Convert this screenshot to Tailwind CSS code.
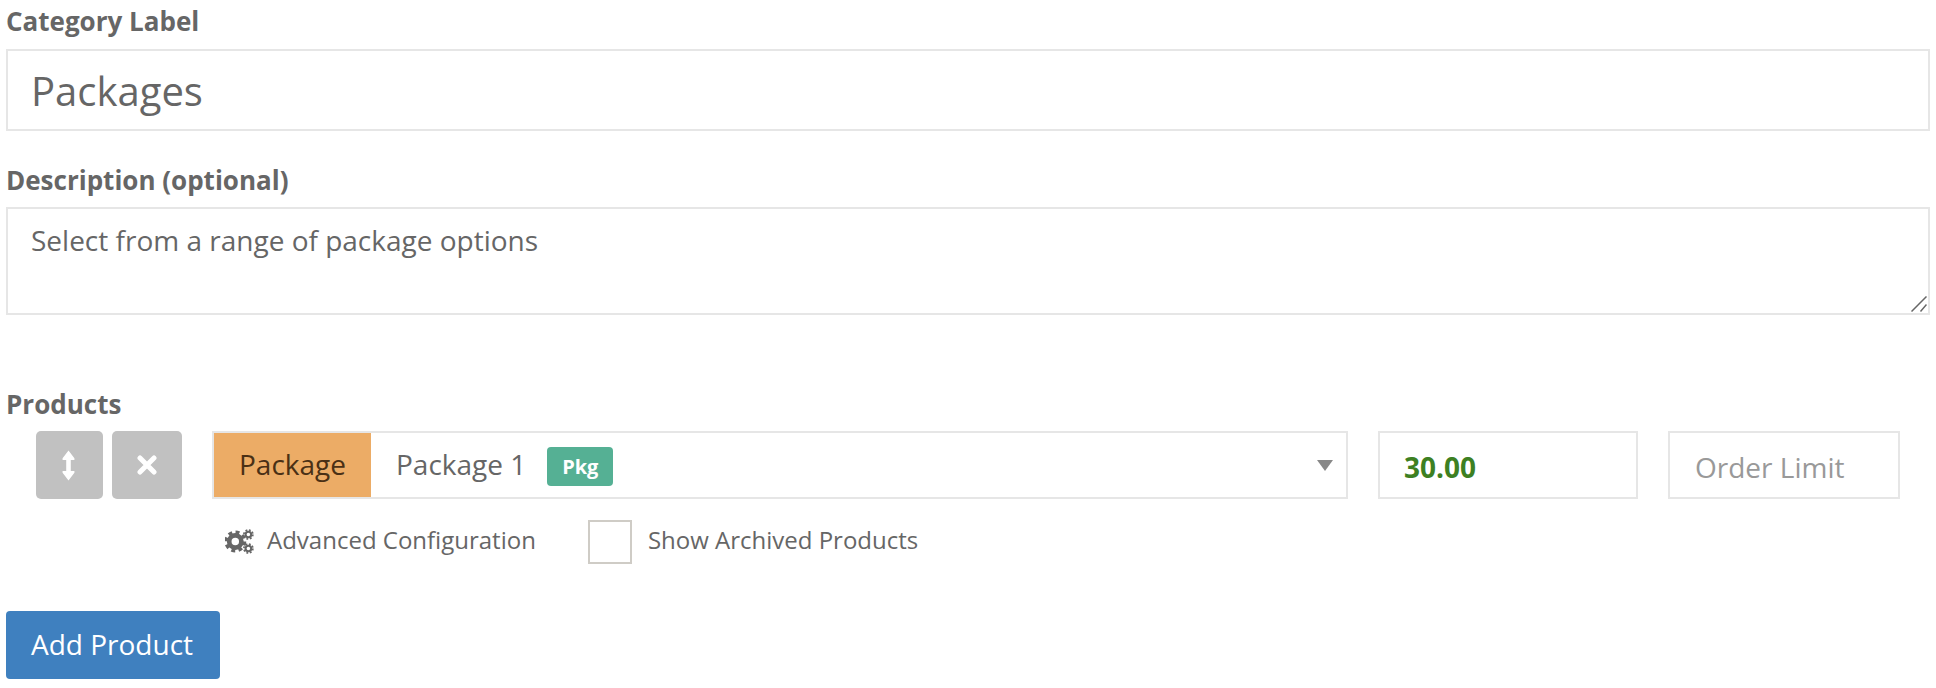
<!DOCTYPE html>
<html lang="en">
<head>
  <meta charset="UTF-8" />
  <title>Category</title>
  <script src="https://cdn.jsdelivr.net/npm/@tailwindcss/browser@4"></script>
</head>
<body class="bg-white text-[#666] font-['Open_Sans',sans-serif] overflow-hidden">
  <div class="px-[6px]">
    <!-- category label -->
    <label class="block h-[49px] pt-[6px] text-[26px] leading-[30px] font-bold">Category Label</label>
    <input type="text" value="Packages" class="block w-full h-[82px] border-2 border-[#e6e6e6] px-[23px] text-[40px] text-[#666] outline-none" />

    <!-- description -->
    <label class="block h-[42px] mt-[34px] text-[26px] leading-[30px] font-bold">Description (optional)</label>
    <div class="relative">
      <textarea class="block w-full h-[108px] border-2 border-[#e6e6e6] px-[23px] py-[12px] text-[28px] leading-[38px] text-[#666] outline-none resize-none">Select from a range of package options</textarea>
      <svg class="absolute right-[3px] bottom-[3px] w-[16px] h-[16px]" viewBox="0 0 16 16" fill="none" stroke="#666" stroke-width="1.5"><path d="M0.5 15.5 15.5 0.5M9.5 15.5 15.5 8.5"/></svg>
    </div>

    <!-- products -->
    <label class="block h-[42px] mt-[74px] text-[26px] leading-[30px] font-bold">Products</label>
    <div class="flex pl-[30px] pr-[30px]">
      <button class="w-[67px] h-[68px] mr-[9px] flex items-center justify-center rounded-[5px] bg-[#c1c1c1] text-white">
        <svg class="w-[13px] h-[31px] -ml-[2px]" viewBox="0 0 14 34" fill="currentColor"><path d="M7 0.5 13.5 9V11H9.5V23H13.5V25L7 33.5 0.5 25V23H4.5V11H0.5V9Z"/></svg>
      </button>
      <button class="w-[70px] h-[68px] flex items-center justify-center rounded-[5px] bg-[#c1c1c1] text-white">
        <svg class="w-[20px] h-[20px]" viewBox="0 0 20 20" fill="none" stroke="currentColor" stroke-width="5" stroke-linecap="round"><path d="M3 3 17 17M17 3 3 17"/></svg>
      </button>

      <div class="ml-[30px] flex-1 min-w-0">
        <div class="flex gap-[30px]">
          <div class="flex-1 h-[68px] flex items-center border-2 border-[#e6e6e6] text-[28px]">
            <span class="h-full w-[157px] pb-[2px] flex items-center justify-center bg-[#ecac66] text-[#4a3015]">Package</span>
            <span class="ml-[25px] pb-[2px]">Package 1</span>
            <span class="ml-[21px] w-[66px] h-[39px] mt-[3px] flex items-center justify-center rounded-[4px] bg-[#55b094] text-white text-[20px] font-bold">Pkg</span>
            <span class="ml-auto mr-[13px] w-0 h-0 border-x-[8px] border-x-transparent border-t-[11px] border-t-[#888]"></span>
          </div>
          <input type="text" value="30.00" class="block w-[260px] h-[68px] border-2 border-[#e6e6e6] px-[24px] pt-[3px] text-[28px] font-bold text-[#3d8022] outline-none" />
          <input type="text" placeholder="Order Limit" class="block w-[232px] h-[68px] border-2 border-[#e6e6e6] px-[25px] pt-[3px] text-[28px] outline-none placeholder:text-[#999]" />
        </div>
        <div class="flex items-center mt-[21px] text-[24px]">
          <svg class="ml-[13px] w-[29px] h-[25px] mb-[2px]" viewBox="0 0 31 26" fill="#666">
            <circle cx="11" cy="13" r="6.5" fill="none" stroke="#666" stroke-width="5"/>
            <circle cx="11" cy="13" r="10" fill="none" stroke="#666" stroke-width="3.5" stroke-dasharray="4.2 3.65"/>
            <circle cx="25" cy="5.5" r="3" fill="none" stroke="#666" stroke-width="2.2"/>
            <circle cx="25" cy="5.5" r="4.8" fill="none" stroke="#666" stroke-width="1.8" stroke-dasharray="2 1.77"/>
            <circle cx="25" cy="20.5" r="3" fill="none" stroke="#666" stroke-width="2.2"/>
            <circle cx="25" cy="20.5" r="4.8" fill="none" stroke="#666" stroke-width="1.8" stroke-dasharray="2 1.77"/>
          </svg>
          <span class="ml-[13px] mb-[4px]">Advanced Configuration</span>
          <span class="ml-[52px] w-[44px] h-[44px] border-2 border-[#cfccc6] bg-white"></span>
          <span class="ml-[16px] mb-[4px]">Show Archived Products</span>
        </div>
      </div>
    </div>

    <button class="block mt-[47px] w-[214px] h-[68px] pr-[2px] pb-[2px] rounded-[4px] bg-[#3f80bf] text-white text-[28px]">Add Product</button>
  </div>
</body>
</html>
